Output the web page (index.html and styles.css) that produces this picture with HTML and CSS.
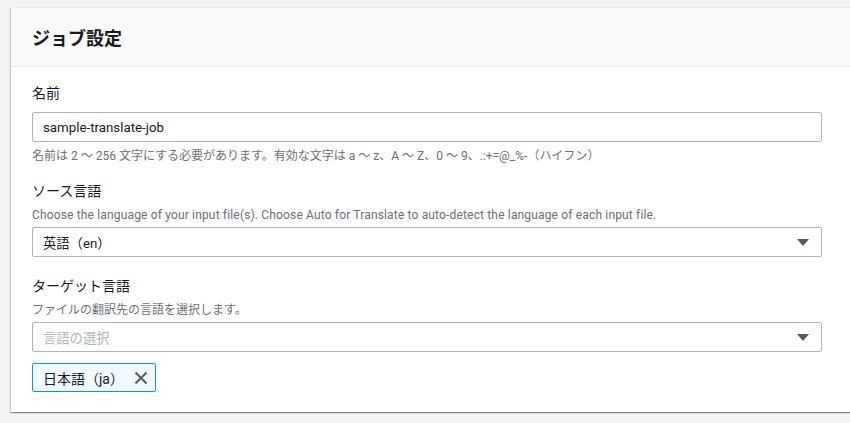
FILE: index.html
```html
<!DOCTYPE html>
<html lang="ja">
<head>
<meta charset="utf-8">
<link rel="stylesheet" href="styles.css">
</head>
<body>
<div class="page">
  <section class="card">
    <header class="card-header"><h2>ジョブ設定</h2></header>
    <div class="card-body">
      <div class="field">
        <label class="label">名前</label>
        <div class="input">sample-translate-job</div>
        <div class="hint">名前は 2 ～ 256 文字にする必要があります。有効な文字は a ～ z、A ～ Z、0 ～ 9、.:+=@_%-（ハイフン）</div>
      </div>
      <div class="field">
        <label class="label">ソース言語</label>
        <div class="desc desc-en">Choose the language of your input file(s). Choose Auto for Translate to auto-detect the language of each input file.</div>
        <div class="input select"><span>英語（en）</span><span class="caret"></span></div>
      </div>
      <div class="field">
        <label class="label">ターゲット言語</label>
        <div class="desc">ファイルの翻訳先の言語を選択します。</div>
        <div class="input select"><span class="placeholder">言語の選択</span><span class="caret"></span></div>
        <div class="tokens">
          <div class="token"><span>日本語（ja）</span>
            <svg class="x" width="14" height="14" viewBox="0 0 14 14"><path d="M1.5 1.5L12.5 12.5M12.5 1.5L1.5 12.5" stroke="#545b64" stroke-width="2" fill="none"/></svg>
          </div>
        </div>
      </div>
    </div>
  </section>
</div>
</body>
</html>
```
FILE: styles.css
```css
html, body {
  margin: 0;
  padding: 0;
  background: #f2f3f3;
  overflow: hidden;
}
body {
  font-family: Roboto, "Noto Sans CJK JP", sans-serif;
  color: #16191f;
  width: 850px;
  height: 423px;
}
.page {
  padding: 7px 0 0 11px;
}
.card {
  width: 860px;
  background: #fff;
  border-top: 1px solid #eaeded;
  box-shadow: 0 1px 1px 0 rgba(0,28,36,.3), 1px 1px 1px 0 rgba(0,28,36,.15), -1px 1px 1px 0 rgba(0,28,36,.15);
}
.card-header {
  background: #fafafa;
  border-bottom: 1px solid #eaeded;
  height: 58px;
  display: flex;
  align-items: center;
  padding: 0 21px;
}
.card-header h2 {
  margin: 0;
  font-size: 18px;
  font-weight: 700;
  line-height: 22px;
  font-family: "Noto Sans CJK JP", sans-serif;
}
.card-body {
  padding: 15px 21px 20px;
  width: 790px;
  display: flex;
  flex-direction: column;
  gap: 18px;
}
.field {
  display: flex;
  flex-direction: column;
}
.label {
  font-size: 14px;
  line-height: 22px;
  margin-bottom: 8px;
}
.desc {
  font-size: 12px;
  line-height: 16px;
  color: #687078;
  margin-top: -3px;
  margin-bottom: 4px;
}
.desc-en {
  letter-spacing: 0.16px;
}
.hint {
  font-size: 12px;
  line-height: 16px;
  color: #687078;
  margin-top: 6px;
  margin-bottom: -2px;
}
.input {
  height: 30px;
  box-sizing: border-box;
  border: 1px solid #aab7b8;
  border-radius: 2px;
  padding: 0 10px;
  font-size: 13.3px;
  display: flex;
  align-items: center;
}
.select {
  justify-content: space-between;
  padding-right: 12px;
}
.placeholder {
  color: #aab7b8;
}
.caret {
  width: 0;
  height: 0;
  border-left: 6px solid transparent;
  border-right: 6px solid transparent;
  border-top: 7px solid #545b64;
}
.tokens {
  display: flex;
  margin-top: 11px;
}
.token {
  height: 29px;
  box-sizing: border-box;
  border: 1px solid #00a1c9;
  border-radius: 2px;
  background: #f1faff;
  display: flex;
  align-items: center;
  gap: 10px;
  padding: 0 7px 0 10px;
  font-size: 14px;
}
.x {
  display: block;
}
```
